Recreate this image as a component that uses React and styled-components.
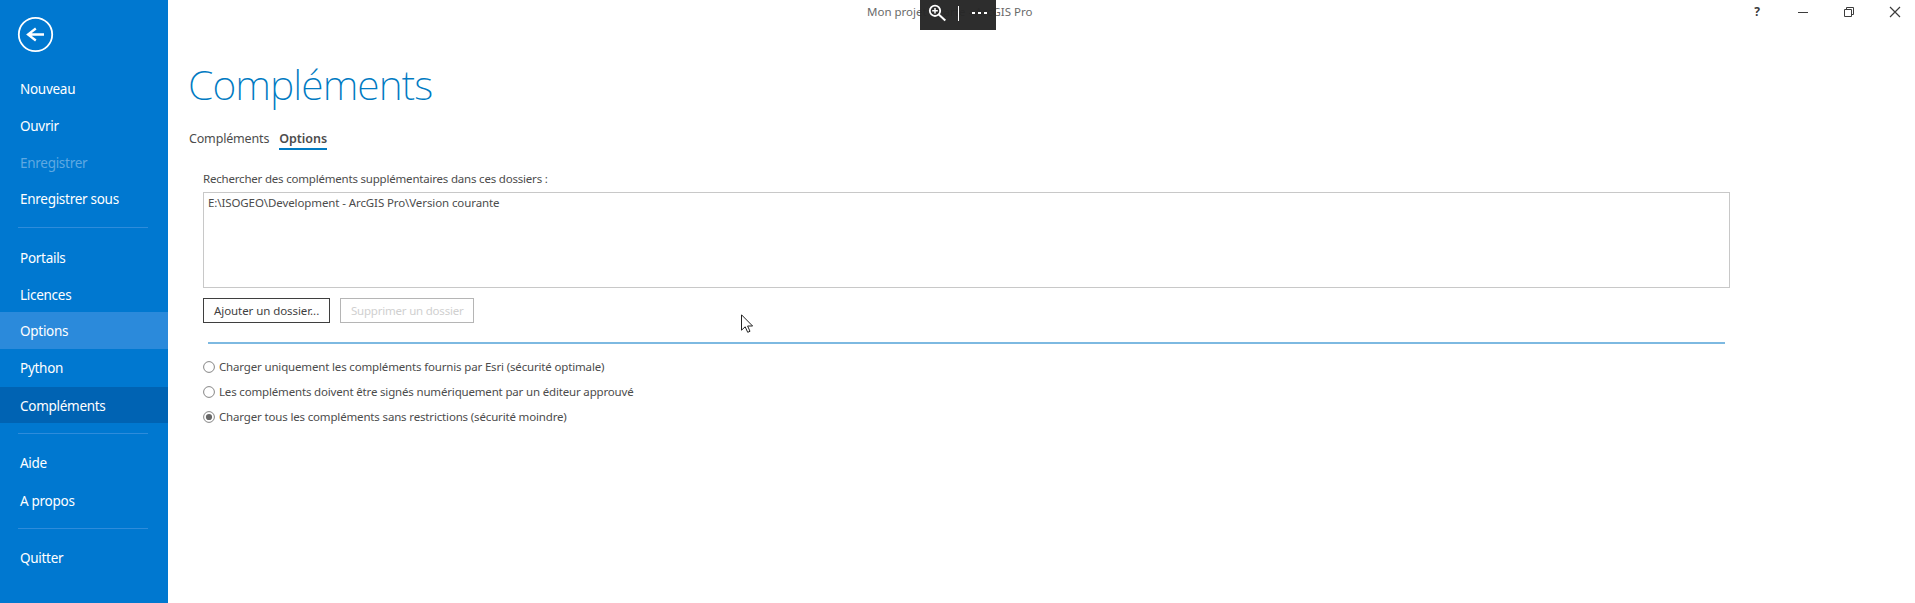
import React from "react";
import styled, { createGlobalStyle } from "styled-components";

const GlobalStyle = createGlobalStyle`
  * { box-sizing: border-box; }
  body { margin: 0; background: #fff; overflow: hidden; }
`;

const Window = styled.div`
  display: flex;
  position: relative;
  width: 1915px;
  height: 603px;
  background: #fff;
  color: #4c4c4c;
  font-family: "Noto Sans", "Open Sans", sans-serif;
  font-size: 11.5px;
`;

const Sidebar = styled.nav`
  width: 168px;
  height: 100%;
  flex: none;
  background: #0078d0;
  color: #fff;
`;

const BackButton = styled.button`
  display: block;
  width: 37px;
  height: 37px;
  margin: 16px 0 18px 17px;
  padding: 0;
  border: 0;
  background: none;
`;

const MenuItem = styled.div`
  height: ${(p) => p.$height || 37}px;
  padding: ${(p) => p.$top || 8}px 0 0 20px;
  line-height: 21px;
  font-size: 13.5px;
  letter-spacing: -0.28px;
  white-space: nowrap;
  color: ${(p) => (p.$disabled ? "#5fa9e2" : "#fff")};
  background: ${(p) => (p.$active ? "#0063b3" : p.$hover ? "#2b8adb" : "transparent")};
`;

const MenuDivider = styled.hr`
  width: 130px;
  height: 1px;
  margin: ${(p) => p.$before}px 0 11px 18px;
  border: 0;
  background: #2e8cdb;
`;

const Main = styled.main`
  flex: 1;
  min-width: 0;
`;

const TitleBar = styled.header`
  display: flex;
  height: 24px;
  padding-left: 699px;
  justify-content: space-between;
`;

const WindowTitle = styled.span`
  line-height: 23px;
  color: #6a6a6a;
  white-space: nowrap;
`;

const WindowControls = styled.div`
  display: flex;
  margin-right: 14px;
  width: 150px;
  height: 23px;
  align-items: center;
  justify-content: space-between;
`;

const HelpMark = styled.span`
  width: 12px;
  text-align: center;
  font-size: 12px;
  font-weight: 700;
  color: #3c3c3c;
`;

const ControlIcon = styled.svg`
  display: block;
  width: 12px;
  height: 12px;
  fill: none;
  stroke: #3c3c3c;
`;

const PageTitle = styled.h1`
  margin: 31px 0 0 20px;
  font-size: 41px;
  line-height: 58px;
  font-weight: 200;
  letter-spacing: -0.93px;
  color: #007ac2;
`;

const Tabs = styled.div`
  display: flex;
  gap: 10px;
  margin: 15px 0 0 21px;
`;

const Tab = styled.div`
  height: 22px;
  padding-top: 1px;
  line-height: 19px;
  font-size: 12.5px;
  letter-spacing: ${(p) => (p.$active ? "-0.05px" : "-0.17px")};
  font-weight: ${(p) => (p.$active ? 600 : 400)};
  border-bottom: 2px solid ${(p) => (p.$active ? "#007ac2" : "transparent")};
`;

const Panel = styled.section`
  width: 1527px;
  margin: 20px 0 0 35px;
`;

const Text = styled.span`
  display: block;
  white-space: nowrap;
  letter-spacing: ${(p) => p.$track || 0}px;
`;

const PanelLabel = styled.div`
  height: 22px;
  line-height: 17px;
`;

const FolderList = styled.div`
  height: 96px;
  padding: 1px 4px;
  border: 1px solid #c8c8c8;
  line-height: 17px;
`;

const Actions = styled.div`
  display: flex;
  gap: 10px;
  margin-top: 10px;
`;

const ActionButton = styled.button`
  width: ${(p) => p.$width}px;
  height: 25px;
  padding: 0 0 1px 10px;
  border: 1px solid #3f3f3f;
  background: #fff;
  color: #3f3f3f;
  font: inherit;
  text-align: left;

  &:disabled {
    border-color: #b5b5b5;
    color: #d0d0d0;
  }
`;

const Separator = styled.hr`
  height: 2px;
  margin: 19px 5px 10px;
  border: 0;
  background: #7db9e1;
`;

const RadioRow = styled.label`
  display: flex;
  align-items: center;
  gap: 4px;
  height: 25px;
`;

const RadioMark = styled.svg`
  width: 12px;
  height: 12px;
  margin-top: 1px;
`;

const CaptureBar = styled.div`
  position: absolute;
  left: 920px;
  top: 0;
  width: 76px;
  height: 30px;
  background: rgba(38, 38, 38, 0.97);
`;

const Pointer = styled.svg`
  position: absolute;
  left: 741px;
  top: 314px;
`;

const MENU = [
  [
    { label: "Nouveau" },
    { label: "Ouvrir" },
    { label: "Enregistrer", disabled: true, height: 36 },
    { label: "Enregistrer sous" },
  ],
  [
    { label: "Portails", top: 9 },
    { label: "Licences", height: 36, top: 9 },
    { label: "Options", hover: true, top: 9 },
    { label: "Python", height: 38, top: 9 },
    { label: "Compléments", active: true, height: 36, top: 9 },
  ],
  [{ label: "Aide" }, { label: "A propos", height: 38, top: 9 }],
  [{ label: "Quitter" }],
];

const DIVIDER_GAPS = [0, 9, 10, 8];

const CHOICES = [
  { text: "Charger uniquement les compléments fournis par Esri (sécurité optimale)", track: -0.16 },
  { text: "Les compléments doivent être signés numériquement par un éditeur approuvé", track: -0.17 },
  { text: "Charger tous les compléments sans restrictions (sécurité moindre)", track: -0.16, checked: true },
];

function Radio({ checked }) {
  return (
    <RadioMark viewBox="0 0 12 12">
      <circle cx="6" cy="6" r="5.4" fill="#fff" stroke="#858585" strokeWidth="1" />
      {checked && <circle cx="6" cy="6" r="3.1" fill="#686868" />}
    </RadioMark>
  );
}

export default function App() {
  return (
    <Window>
      <GlobalStyle />
      <Sidebar>
        <BackButton aria-label="Retour">
          <svg width="37" height="37" viewBox="0 0 37 37" fill="none" stroke="#fff">
            <circle cx="18.5" cy="18.5" r="16.7" strokeWidth="1.8" />
            <path d="M27 18.5H11M18.8 12.5L11 18.5L18.8 24.5" strokeWidth="2.3" />
          </svg>
        </BackButton>
        {MENU.map((group, i) => (
          <React.Fragment key={i}>
            {i > 0 && <MenuDivider $before={DIVIDER_GAPS[i]} />}
            {group.map((m) => (
              <MenuItem
                key={m.label}
                $height={m.height}
                $top={m.top}
                $disabled={m.disabled}
                $hover={m.hover}
                $active={m.active}
              >
                {m.label}
              </MenuItem>
            ))}
          </React.Fragment>
        ))}
      </Sidebar>
      <Main>
        <TitleBar>
          <WindowTitle>Mon projet - Carte - ArcGIS Pro</WindowTitle>
          <WindowControls>
            <HelpMark>?</HelpMark>
            <ControlIcon viewBox="0 0 12 12"><path d="M1 6.5H11" /></ControlIcon>
            <ControlIcon viewBox="0 0 12 12">
              <path d="M1.5 3.5H8.5V10.5H1.5ZM3.5 3.5V1.5H10.5V8.5H8.5" />
            </ControlIcon>
            <ControlIcon viewBox="0 0 12 12"><path d="M1 1L11 11M11 1L1 11" strokeWidth="1.2" /></ControlIcon>
          </WindowControls>
        </TitleBar>
        <PageTitle>Compléments</PageTitle>
        <Tabs>
          <Tab>Compléments</Tab>
          <Tab $active>Options</Tab>
        </Tabs>
        <Panel>
          <PanelLabel>
            <Text $track={-0.2}>Rechercher des compléments supplémentaires dans ces dossiers :</Text>
          </PanelLabel>
          <FolderList>
            <Text $track={-0.1}>{"E:\\ISOGEO\\Development - ArcGIS Pro\\Version courante"}</Text>
          </FolderList>
          <Actions>
            <ActionButton $width={127}><Text $track={-0.07}>Ajouter un dossier...</Text></ActionButton>
            <ActionButton $width={134} disabled><Text $track={-0.21}>Supprimer un dossier</Text></ActionButton>
          </Actions>
          <Separator />
          {CHOICES.map((c) => (
            <RadioRow key={c.text}>
              <Radio checked={c.checked} />
              <Text $track={c.track}>{c.text}</Text>
            </RadioRow>
          ))}
        </Panel>
      </Main>
      <CaptureBar>
        <svg width="76" height="30" viewBox="0 0 76 30" fill="none" stroke="#fff">
          <circle cx="15" cy="10.8" r="5.2" strokeWidth="1.8" />
          <path d="M18.8 14.6L25.3 20.6" strokeWidth="2" />
          <path d="M12.2 10.8H17.8M15 8V13.6" strokeWidth="1.5" />
          <path d="M38.5 6V21" strokeWidth="1" />
          <path d="M52 13H55M58 13H61M64 13H67" strokeWidth="2" />
        </svg>
      </CaptureBar>
      <Pointer width="13" height="20" viewBox="0 0 13 20">
        <path d="M.5 .8V16.2L4.2 12.8L6.7 18.3L9 17.3L6.6 12H11.6Z" fill="#fff" stroke="#222" strokeWidth="1" />
      </Pointer>
    </Window>
  );
}
